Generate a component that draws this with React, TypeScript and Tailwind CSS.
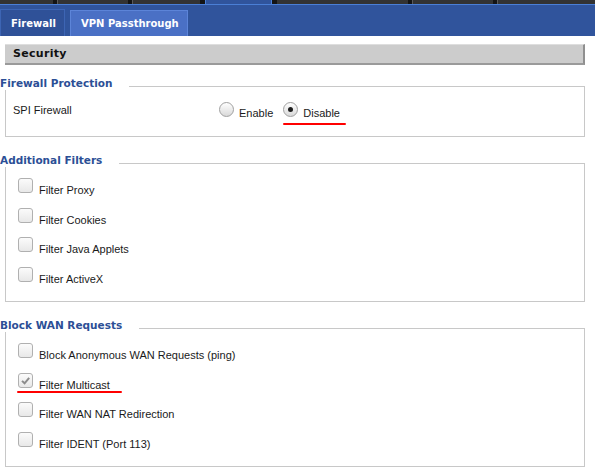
const bold = "font-['DejaVu_Sans',Verdana,sans-serif] font-bold";
const body = "font-['Liberation_Sans',Arial,sans-serif] text-[11px] text-[#1a1a1a]";

const strip: { w: string; kind: "seg" | "sep" | "black" | "active" }[] = [
  { w: "w-[53px]", kind: "seg" },
  { w: "w-[5px]", kind: "sep" },
  { w: "w-[70px]", kind: "seg" },
  { w: "w-[5px]", kind: "sep" },
  { w: "w-[67px]", kind: "seg" },
  { w: "w-[5px]", kind: "black" },
  { w: "w-[67px]", kind: "active" },
  { w: "w-[5px]", kind: "black" },
  { w: "w-[131px]", kind: "seg" },
  { w: "w-[5px]", kind: "sep" },
  { w: "w-[80px]", kind: "seg" },
  { w: "w-[5px]", kind: "sep" },
  { w: "flex-1", kind: "seg" },
];

function Checkbox({ checked }: { checked?: boolean }) {
  return (
    <span className="flex h-[15px] w-[15px] shrink-0 items-center justify-center rounded-[3px] border border-[#b0b0b0] bg-linear-to-b from-[#fbfbfb] to-[#e8e8e8]">
      {checked && (
        <svg width="11" height="11" viewBox="0 0 12 12">
          <path d="M2.2 6.4 L5 9.1 L10 3.2" fill="none" stroke="#8c8c8c" strokeWidth="2.2" />
        </svg>
      )}
    </span>
  );
}

function Radio({ checked }: { checked?: boolean }) {
  return (
    <span className="flex h-[15px] w-[15px] shrink-0 items-center justify-center rounded-full border border-[#a0a0a0] bg-linear-to-b from-[#ffffff] to-[#d9d9d9]">
      {checked && <span className="h-[5px] w-[5px] rounded-full bg-[#1e1e1e]" />}
    </span>
  );
}

function Legend({ children }: { children: string }) {
  return (
    <div className="relative z-10 -mb-[4px] flex h-[14px]">
      <span className={`${bold} bg-white pr-[17px] text-[10.5px] leading-[14px] text-[#2c4f96]`}>{children}</span>
    </div>
  );
}

function CheckRow({ label, checked, marked }: { label: string; checked?: boolean; marked?: boolean }) {
  return (
    <div className="relative flex items-end gap-[6px]">
      <Checkbox checked={checked} />
      <span className={`${body} -mb-[4px] leading-[14px]`}>{label}</span>
      {marked && <span className="absolute left-[-1px] top-[18px] h-[2px] w-[105px] rounded-full bg-[#f00]" />}
    </div>
  );
}

export default function App() {
  return (
    <div className="h-[470px] w-[595px] overflow-hidden bg-white">
      <div className="flex h-[4px]">
        {strip.map((s, i) => (
          <div
            key={i}
            className={`${s.w} h-full ${
              s.kind === "seg"
                ? "bg-[#333333]"
                : s.kind === "sep"
                ? "border-r border-[#5a5a5a] bg-[#141414]"
                : s.kind === "black"
                ? "bg-[#141414]"
                : "border-x border-[#4a7fd6] bg-[#30549c]"
            }`}
          />
        ))}
      </div>
      <div className="flex h-[32px] items-end border-t border-[#4a7fd6] bg-[#30549c]">
        <div className={`${bold} flex h-[27px] w-[65px] items-start border-x border-t border-[#3d65b4] bg-[#2f5198] pl-[10px] pt-[6px] text-[10px] text-white`}>
          Firewall
        </div>
        <div className={`${bold} ml-[5px] flex h-[26px] w-[118px] items-start border-x border-t border-[#5c84d8] bg-[#4a70c5] pl-[10px] pt-[5px] text-[10px] text-white`}>
          VPN Passthrough
        </div>
      </div>

      <div className={`${bold} mx-[5px] mt-[8px] flex h-[21px] w-[580px] items-center border-t border-r-2 border-b-2 border-t-[#dedede] border-r-[#8f8f8f] border-b-[#9a9a9a] bg-[#cccccc] pl-[8px] text-[11px] tracking-[0.3px] text-[#111]`}>
        Security
      </div>

      <div className="mt-[11px]">
        <Legend>Firewall Protection</Legend>
        <div className="ml-[5px] flex h-[51px] w-[580px] border border-[#c8c8c8]">
          <div className={`${body} w-[213px] shrink-0 pl-[7px] pt-[16px] leading-[14px]`}>SPI Firewall</div>
          <div className="flex items-start gap-[10px] pt-[15px]">
            <div className="flex items-end gap-[5px]">
              <Radio />
              <span className={`${body} -mb-[3px] leading-[14px]`}>Enable</span>
            </div>
            <div className="relative flex items-end gap-[5px]">
              <Radio checked />
              <span className={`${body} -mb-[3px] leading-[14px]`}>Disable</span>
              <span className="absolute left-0 top-[21px] h-[2px] w-[63px] rounded-full bg-[#f00]" />
            </div>
          </div>
        </div>
      </div>

      <div className="mt-[16px]">
        <Legend>Additional Filters</Legend>
        <div className="ml-[5px] flex h-[139px] w-[580px] flex-col gap-[14.67px] border border-[#c8c8c8] pl-[12px] pt-[14px]">
          <CheckRow label="Filter Proxy" />
          <CheckRow label="Filter Cookies" />
          <CheckRow label="Filter Java Applets" />
          <CheckRow label="Filter ActiveX" />
        </div>
      </div>

      <div className="mt-[16px]">
        <Legend>Block WAN Requests</Legend>
        <div className="ml-[5px] flex h-[139px] w-[580px] flex-col gap-[14.67px] border border-[#c8c8c8] pl-[12px] pt-[14px]">
          <CheckRow label="Block Anonymous WAN Requests (ping)" />
          <CheckRow label="Filter Multicast" checked marked />
          <CheckRow label="Filter WAN NAT Redirection" />
          <CheckRow label="Filter IDENT (Port 113)" />
        </div>
      </div>
    </div>
  );
}
